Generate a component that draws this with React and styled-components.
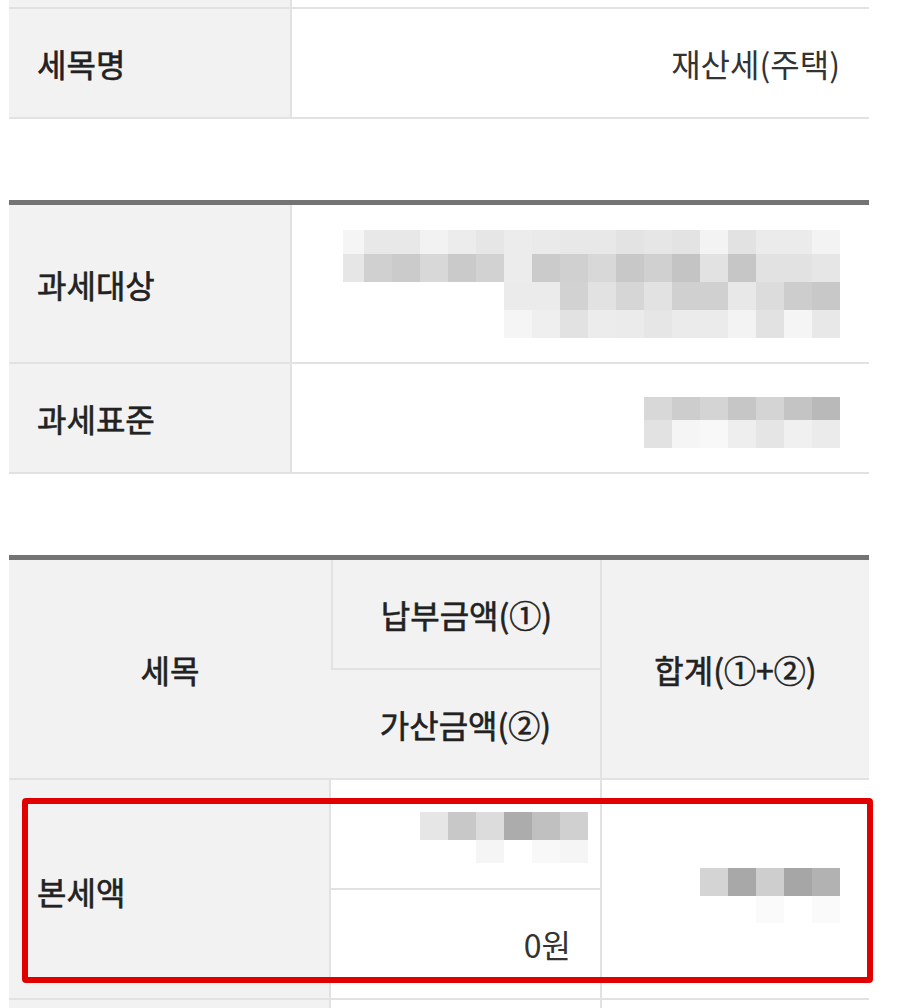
import React from "react";
import styled, { createGlobalStyle, css } from "styled-components";

const GlobalStyle = createGlobalStyle`
  body {
    margin: 0;
    background: #fff;
    font-family: "Noto Sans CJK KR", "Noto Sans", sans-serif;
    color: #222;
  }
  * { box-sizing: border-box; }
`;

const LINE = "#e2e2e2";
const LABEL_BG = "#f2f2f2";

// medium-weight look for header/label text
const medium = css`
  font-weight: 400;
  color: #222;
  -webkit-text-stroke: 0.6px #222;
`;

const Page = styled.div`
  width: 860px;
  margin-left: 9px;
`;

const Table = styled.section`
  margin-top: ${(p) => p.$gap || 0}px;
  border-top: ${(p) => (p.$strong ? "5px solid #747474" : "none")};
`;

const Row = styled.div`
  display: grid;
  grid-template-columns: 283px 1fr;
  height: ${(p) => p.$h}px;
  border-bottom: 2px solid ${LINE};
  box-sizing: content-box;
`;

const Label = styled.div`
  display: flex;
  align-items: center;
  padding-left: 28px;
  background: ${LABEL_BG};
  border-right: 2px solid ${LINE};
  font-size: 32px;
  ${medium}
`;

const Value = styled.div`
  display: flex;
  align-items: center;
  justify-content: flex-end;
  padding-right: ${(p) => p.$pr ?? 29}px;
  padding-top: ${(p) => p.$pt || 0}px;
  font-size: 32px;
  font-weight: 400;
  color: #333;
`;

/* 세목 / 납부금액 / 가산금액 / 합계 grid */
const Grid = styled.div`
  position: relative;
  display: grid;
  grid-template-columns: 322px 271px 267px;
  grid-template-rows: ${(p) => p.$rows};
  border-bottom: ${(p) => (p.$open ? "none" : `2px solid ${LINE}`)};
  box-sizing: content-box;
`;

const Cell = styled.div`
  display: flex;
  align-items: center;
  justify-content: ${(p) => p.$justify || "center"};
  grid-row: ${(p) => (p.$span ? "span 2" : "auto")};
  background: ${(p) => (p.$gray ? LABEL_BG : "#fff")};
  border-left: ${(p) => (p.$bl ? `2px solid ${LINE}` : "none")};
  border-right: ${(p) => (p.$br ? `2px solid ${LINE}` : "none")};
  border-bottom: ${(p) => (p.$bb ? `2px solid ${LINE}` : "none")};
  padding-left: ${(p) => p.$pl || 0}px;
  padding-right: ${(p) => p.$pr || 0}px;
  padding-top: ${(p) => p.$pt || 0}px;
  font-size: 32px;
  white-space: nowrap;
  ${(p) =>
    p.$gray
      ? medium
      : css`
          font-weight: 400;
          color: #333;
        `}
`;

const Highlight = styled.div`
  position: absolute;
  left: 13px;
  top: 18px;
  width: 851px;
  height: 185px;
  border: 6px solid #e10000;
  border-radius: 4px;
  pointer-events: none;
`;

// blurred (pixelated) values
const subjectBlur = [
  { x: 0, y: 0, h: 24, first: 21, c: ["f5", "e8", "e8", "f2", "ec", "e6", "ec", "ea", "e8", "e8", "e3", "e6", "e3", "f3", "e2", "eb", "eb", "f3"] },
  { x: 0, y: 24, h: 28, first: 21, c: ["e6", "d0", "cb", "d8", "ca", "d2", "ec", "cb", "d0", "d8", "c8", "d0", "c4", "e2", "c6", "e2", "e2", "e6"] },
  { x: 161, y: 52, h: 28, c: ["eb", "eb", "d2", "e2", "d6", "e2", "d0", "d0", "e8", "dc", "cd", "c8"] },
  { x: 161, y: 80, h: 28, c: ["f5", "ef", "e2", "ec", "eb", "e6", "eb", "eb", "f3", "e2", "f5", "e8"] },
];
const baseBlur = [
  { x: 0, y: 0, h: 23, c: ["d8", "cd", "d4", "c6", "d4", "c4", "b9"] },
  { x: 0, y: 23, h: 28, c: ["e2", "f5", "f8", "ee", "e5", "f0", "eb"] },
];
const payBlur = [
  { x: 0, y: 0, h: 28, c: ["e6", "c8", "dc", "ac", "c0", "d0"] },
  { x: 0, y: 28, h: 23, c: ["ff", "ff", "f5", "ff", "f8", "f5"] },
];
const sumBlur = [
  { x: 0, y: 0, h: 28, c: ["d4", "a8", "ce", "a6", "b2"] },
  { x: 0, y: 28, h: 27, c: ["ff", "ff", "fa", "ff", "fa"] },
];

const Mosaic = ({ rows, width, height }) => (
  <svg width={width} height={height} style={{ display: "block" }}>
    {rows.map((r, ri) => {
      let x = r.x;
      return r.c.map((col, ci) => {
        const w = ci === 0 && r.first ? r.first : 28;
        const rect = (
          <rect key={`${ri}-${ci}`} x={x} y={r.y} width={w} height={r.h} fill={`#${col}${col}${col}`} />
        );
        x += w;
        return rect;
      });
    })}
  </svg>
);

const App = () => {
  return (
    <Page>
      <GlobalStyle />
      <Table>
        <Row $h={7}>
          <Label />
          <Value />
        </Row>
        <Row $h={108}>
          <Label>세목명</Label>
          <Value>재산세(주택)</Value>
        </Row>
      </Table>

      <Table $strong $gap={81}>
        <Row $h={157}>
          <Label>과세대상</Label>
          <Value>
            <Mosaic rows={subjectBlur} width={497} height={108} />
          </Value>
        </Row>
        <Row $h={108}>
          <Label>과세표준</Label>
          <Value $pt={8}>
            <Mosaic rows={baseBlur} width={196} height={51} />
          </Value>
        </Row>
      </Table>

      <Table $strong $gap={81}>
        <Grid $rows="110px 108px">
          <Cell $gray $span>세목</Cell>
          <Cell $gray $bl $br $bb>납부금액(①)</Cell>
          <Cell $gray $span>합계(①+②)</Cell>
          <Cell $gray $br>가산금액(②)</Cell>
        </Grid>
        <Grid $rows="110px 108px">
          <Cell $gray $span $br $justify="flex-start" $pl={28} $pt={4}>본세액</Cell>
          <Cell $br $bb $justify="flex-end" $pr={12} $pt={6}>
            <Mosaic rows={payBlur} width={168} height={51} />
          </Cell>
          <Cell $span $justify="flex-end" $pr={29} $pt={12}>
            <Mosaic rows={sumBlur} width={140} height={55} />
          </Cell>
          <Cell $br $justify="flex-end" $pr={29}>0원</Cell>
          <Highlight />
        </Grid>
        <Grid $rows="8px" $open>
          <Cell $gray $br />
          <Cell $br />
          <Cell />
        </Grid>
      </Table>
    </Page>
  );
};

export default App;
